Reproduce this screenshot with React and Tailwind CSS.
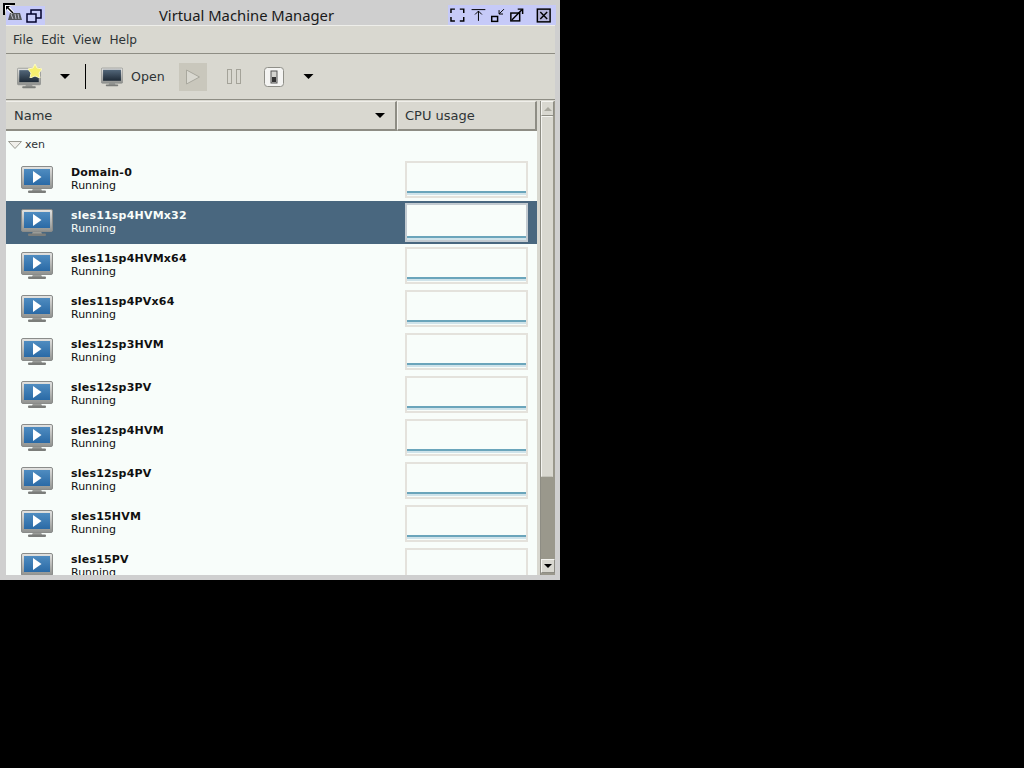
const vms = [
  'Domain-0',
  'sles11sp4HVMx32',
  'sles11sp4HVMx64',
  'sles11sp4PVx64',
  'sles12sp3HVM',
  'sles12sp3PV',
  'sles12sp4HVM',
  'sles12sp4PV',
  'sles15HVM',
  'sles15PV',
];

function Monitor({ play, id, className }) {
  return (
    <svg viewBox="0 0 32 27" className={className}>
      <defs>
        <linearGradient id={`bezel-${id}`} x1="0" y1="0" x2="0" y2="1">
          <stop offset="0" stopColor="#e4e4e2" />
          <stop offset="1" stopColor="#8f918e" />
        </linearGradient>
        <linearGradient id={`screen-${id}`} x1="0" y1="0" x2="0" y2="1">
          {play ? <stop offset="0" stopColor="#4f8cc0" /> : <stop offset="0" stopColor="#53677a" />}
          {play ? <stop offset="1" stopColor="#2a6aa6" /> : <stop offset="1" stopColor="#1e2a36" />}
        </linearGradient>
      </defs>
      <path d="M12 22h8l1 3H11z" fill="#9a9c98" />
      <rect x="7" y="24.5" width="18" height="2.5" rx="1" fill="#7b7d7a" />
      <rect x="0.5" y="0.5" width="31" height="22" rx="1.5" fill={`url(#bezel-${id})`} stroke="#8a8c8a" />
      <rect x="3" y="3" width="26" height="16" fill={`url(#screen-${id})`} />
      {play && <path d="M12 5l8.5 6L12 17z" fill="#fff" />}
    </svg>
  );
}

function Arrow({ className }) {
  return (
    <svg viewBox="0 0 10 5" className={className}>
      <path d="M0 0h10L5 5z" fill="#000" />
    </svg>
  );
}

function TitleButtons() {
  return (
    <div className="flex h-[20px] w-[108px] items-center bg-[#c6caf8] pl-[2px]">
      <svg viewBox="0 0 108 20" className="h-[20px] w-[108px]" fill="none" stroke="#000" strokeWidth="2">
        <path d="M1 8V4h4M10 4h4v4M1 12v4h4M10 16h4v-4" strokeWidth="1.5" />
        <path d="M22 4.5h14" strokeWidth="1" />
        <path d="M29 16V6M25.5 9.5L29 6l3.5 3.5" strokeWidth="1" />
        <rect x="42.5" y="11.5" width="6" height="5" strokeWidth="1.5" />
        <path d="M50 9l5-5M50 5v4h4" strokeWidth="1" />
        <rect x="62" y="8" width="9" height="8" strokeWidth="1.5" />
        <path d="M63 15l10-10M69 4h5v5" strokeWidth="1.5" />
        <rect x="89" y="4" width="13" height="13" strokeWidth="1.5" fill="#b4b4d8" />
        <path d="M92 7l7 7M99 7l-7 7" strokeWidth="1.5" />
      </svg>
    </div>
  );
}

function VmRow({ name, selected, id }) {
  return (
    <div className={`flex h-[43px] shrink-0 items-center ${selected ? 'bg-[#49677f] text-[#f8fdfa]' : ''}`}>
      <div className="flex w-[399px] items-center">
        <Monitor play id={id} className="ml-[15px] h-[27px] w-[32px]" />
        <div className="ml-[18px] pb-[2px] text-[11px] leading-[13px]">
          <div className="font-bold tracking-[0.2px]">{name}</div>
          <div>Running</div>
        </div>
      </div>
      {selected ? (
        <div className="flex h-[39px] w-[123px] flex-col justify-end border-2 border-[#c3cbd1] bg-[#f8fdfa]">
          <div className="h-[2px] bg-[#6ba5bb]" />
          <div className="h-[2px] bg-[#cfe3ea]" />
        </div>
      ) : (
        <div className="flex h-[37px] w-[123px] flex-col justify-end border-2 border-[#e4e2dc] bg-[#f8fdfa] pb-[1px]">
          <div className="h-[2px] bg-[#6ba5bb]" />
          <div className="h-[2px] bg-[#cfe3ea]" />
        </div>
      )}
    </div>
  );
}

export default function App() {
  return (
    <div className="relative h-[768px] w-[1024px] overflow-hidden bg-black font-['DejaVu_Sans',sans-serif] text-[13px] text-black">
      <div className="flex h-[580px] w-[560px] flex-col bg-[#cfcfcf]">
        <div className="flex h-[25px] shrink-0 items-end justify-between pl-[6px] pr-[4px] pt-[1px]">
          <div className="flex h-[19px] w-[39px] items-center gap-[1px] bg-[#c6caf8] pl-[1px]">
            <svg viewBox="0 0 16 10" className="h-[10px] w-[16px]">
              <path d="M1 9l2-7h10l2 7z" fill="#55575a" />
              <path d="M4 3l2 5M8 3l1 5M11 3l1 5" stroke="#b9bbc8" />
            </svg>
            <svg viewBox="0 0 16 14" className="ml-[2px] h-[14px] w-[16px]" fill="none" stroke="#00002a" strokeWidth="1.5">
              <rect x="5" y="1" width="10" height="8" />
              <rect x="1" y="5" width="9" height="8" fill="#c6caf8" />
            </svg>
          </div>
          <div className="flex-1 pl-[3px] pr-[3px] text-center font-['Noto_Sans',sans-serif] text-[14.8px] leading-[20px] text-[#1a1a1a]">
            Virtual Machine Manager
          </div>
          <TitleButtons />
        </div>

        <div className="ml-[6px] mr-[5px] flex min-h-0 flex-1 flex-col bg-[#d9d8d0]">
          <div className="flex h-[29px] shrink-0 items-center gap-[8px] border-y border-t-[#eeeeea] border-b-[#8e8d84] pl-[7px] text-[12.1px] leading-[16px] text-[#2e3436]">
            <span>File</span>
            <span>Edit</span>
            <span>View</span>
            <span>Help</span>
          </div>

          <div className="flex h-[46px] shrink-0 items-center border-b border-[#8e8d84] text-[#2e3436]">
            <div className="relative ml-[11px] h-[24px] w-[24px]">
              <Monitor id="new" className="mt-[2px] h-[22px] w-[24px]" />
              <svg viewBox="0 0 14 14" className="absolute -right-[1px] -top-[1px] h-[14px] w-[14px]">
                <path d="M7 0l2 4 5 1-3 4 1 5-5-2-5 2 1-5-3-4 5-1z" fill="#f6f070" stroke="#fdfbc0" />
              </svg>
            </div>
            <Arrow className="ml-[19px] h-[5px] w-[10px]" />
            <div className="ml-[15px] h-[25px] w-px bg-black" />
            <Monitor id="open" className="ml-[15px] h-[20px] w-[22px]" />
            <span className="ml-[8px] pt-[1px] text-[12.6px]">Open</span>
            <div className="ml-[14px] flex h-[28px] w-[28px] items-center justify-center bg-[#c9c7bc]">
              <svg viewBox="0 0 16 16" className="h-[16px] w-[16px]">
                <path d="M1.5 1l13 7-13 7z" fill="#d9d8d0" stroke="#a9a89e" />
              </svg>
            </div>
            <svg viewBox="0 0 14 15" className="ml-[20px] h-[15px] w-[14px]" fill="none" stroke="#a4a399">
              <rect x="0.5" y="0.5" width="4" height="14" />
              <rect x="9.5" y="0.5" width="4" height="14" />
            </svg>
            <svg viewBox="0 0 20 20" className="ml-[23px] h-[20px] w-[20px]">
              <rect x="0.5" y="0.5" width="19" height="19" rx="3" fill="#f4f4f2" stroke="#8f8f88" />
              <rect x="7" y="4" width="6" height="12" fill="#d4d4d0" stroke="#555" />
              <rect x="8" y="10" width="4" height="5" fill="#333" />
            </svg>
            <Arrow className="ml-[19px] h-[5px] w-[11px]" />
          </div>

          <div className="flex min-h-0 flex-1">
            <div className="flex min-w-0 w-[531px] flex-col pt-px">
              <div className="flex h-[30px] shrink-0 text-[#2e3436]">
                <div className="flex w-[391px] items-center justify-between border-b-2 border-r-2 border-b-[#8e8d84] border-r-[#8e8d84] border-t border-t-[#f0efea] pl-[8px] pr-[10px]">
                  <span>Name</span>
                  <Arrow className="h-[5px] w-[10px]" />
                </div>
                <div className="flex flex-1 items-center border-b-2 border-r-2 border-b-[#8e8d84] border-r-[#8e8d84] border-t border-l border-t-[#f0efea] border-l-[#f0efea] pl-[7px]">
                  CPU usage
                </div>
              </div>
              <div className="flex min-h-0 flex-1 flex-col overflow-hidden bg-[#f8fdfa] text-[#101010]">
                <div className="flex h-[27px] shrink-0 items-center pl-[2px] text-[11px] text-[#2e3436]">
                  <svg viewBox="0 0 14 8" className="h-[8px] w-[14px]">
                    <path d="M0.5 0.5h13L7 7.5z" fill="#f0efea" stroke="#9a9a92" />
                  </svg>
                  <span className="ml-[3px] pt-[1px]">xen</span>
                </div>
                {vms.map((name, i) => (
                  <VmRow key={name} name={name} id={i} selected={i === 1} />
                ))}
              </div>
            </div>

            <div className="ml-[3px] mt-px flex w-[15px] flex-col border-l border-[#8e8d84] bg-[#9a988c]">
              <div className="mr-[1px] flex h-[15px] shrink-0 items-center justify-center border border-t-[#f4f4f0] border-l-[#f4f4f0] border-r-[#8e8d84] border-b-[#8e8d84] bg-[#d9d8d0]">
                <svg viewBox="0 0 8 4" className="h-[4px] w-[8px]"><path d="M4 0l4 4H0z" fill="#a9a89e" /></svg>
              </div>
              <div className="mr-[2px] h-[361px] shrink-0 border border-t-[#f4f4f0] border-l-[#f4f4f0] border-r-[#d9d8d0] border-b-[#c4c3ba] bg-[#d9d8d0]" />
              <div className="flex-1" />
              <div className="mb-[2px] flex h-[14px] shrink-0 items-center justify-center border border-t-[#f4f4f0] border-l-[#f4f4f0] border-r-[#8e8d84] border-b-[#8e8d84] bg-[#d9d8d0]">
                <Arrow className="h-[4px] w-[8px]" />
              </div>
            </div>
          </div>
        </div>
        <div className="h-[5px] shrink-0" />
      </div>

      {/* mouse pointer sitting in the corner of the screen */}
      <svg viewBox="0 0 16 16" className="absolute left-0 top-0 h-[16px] w-[16px]">
        <path d="M4 15V4h11" fill="none" stroke="#000" strokeWidth="2" />
        <path d="M5 13V5h8L9 6l5 6-2 2-6-5z" fill="#fff" />
        <path d="M6 6h4L8.5 7.5l5 5-1 1-5-5L6 10z" fill="#000" />
      </svg>
    </div>
  );
}
